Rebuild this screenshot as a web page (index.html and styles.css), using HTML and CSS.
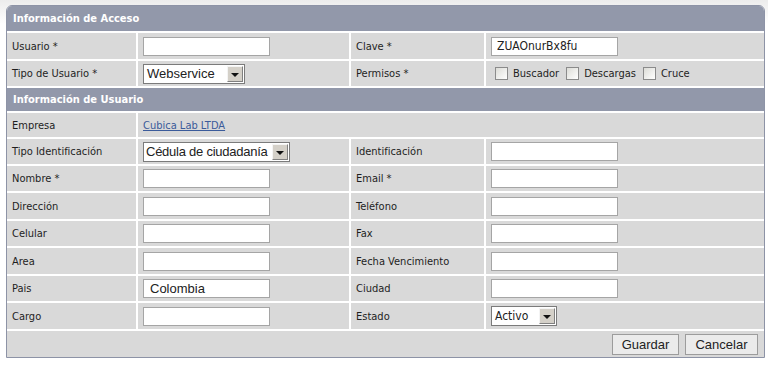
FILE: index.html
```html
<!DOCTYPE html>
<html lang="es">
<head>
    <meta charset="UTF-8">
    <title>Usuario</title>
    <link rel="stylesheet" href="styles.css">
</head>
<body>
    <div class="panel">
        <!-- Acceso -->
        <div class="section-title">Información de Acceso</div>

        <div class="cell label">Usuario *</div>
        <div class="cell"><input type="text" class="field"></div>
        <div class="cell label">Clave *</div>
        <div class="cell"><input type="text" class="field field-pass" value="ZUAOnurBx8fu"></div>

        <div class="cell label">Tipo de Usuario *</div>
        <div class="cell">
            <span class="combo combo-type">
                <span class="combo-text">Webservice</span>
                <span class="combo-arrow"></span>
            </span>
        </div>
        <div class="cell label">Permisos *</div>
        <div class="cell checks">
            <label class="check"><input type="checkbox"> Buscador</label>
            <label class="check"><input type="checkbox"> Descargas</label>
            <label class="check"><input type="checkbox"> Cruce</label>
        </div>

        <!-- Usuario -->
        <div class="section-title">Información de Usuario</div>

        <div class="cell label">Empresa</div>
        <div class="cell wide"><a href="#" class="link">Cubica Lab LTDA</a></div>

        <div class="cell label">Tipo Identificación</div>
        <div class="cell">
            <span class="combo combo-id">
                <span class="combo-text">Cédula de ciudadanía</span>
                <span class="combo-arrow"></span>
            </span>
        </div>
        <div class="cell label">Identificación</div>
        <div class="cell"><input type="text" class="field"></div>

        <div class="cell label">Nombre *</div>
        <div class="cell"><input type="text" class="field"></div>
        <div class="cell label">Email *</div>
        <div class="cell"><input type="text" class="field"></div>

        <div class="cell label">Dirección</div>
        <div class="cell"><input type="text" class="field"></div>
        <div class="cell label">Teléfono</div>
        <div class="cell"><input type="text" class="field"></div>

        <div class="cell label">Celular</div>
        <div class="cell"><input type="text" class="field"></div>
        <div class="cell label">Fax</div>
        <div class="cell"><input type="text" class="field"></div>

        <div class="cell label">Area</div>
        <div class="cell"><input type="text" class="field"></div>
        <div class="cell label">Fecha Vencimiento</div>
        <div class="cell"><input type="text" class="field"></div>

        <div class="cell label">Pais</div>
        <div class="cell"><input type="text" class="field field-country" value="Colombia"></div>
        <div class="cell label">Ciudad</div>
        <div class="cell"><input type="text" class="field"></div>

        <div class="cell label">Cargo</div>
        <div class="cell"><input type="text" class="field"></div>
        <div class="cell label">Estado</div>
        <div class="cell">
            <span class="combo combo-state">
                <span class="combo-text">Activo</span>
                <span class="combo-arrow"></span>
            </span>
        </div>

        <div class="cell actions">
            <button class="btn btn-save">Guardar</button>
            <button class="btn btn-cancel">Cancelar</button>
        </div>
    </div>
</body>
</html>
```

FILE: styles.css
```css
html { background: #ffffff; }

body {
    margin: 0;
    padding: 5px 0 0 6px;
    background: #ffffff linear-gradient(#ececec, #ffffff 24px) no-repeat;
    font-family: Tahoma, "DejaVu Sans Condensed", "DejaVu Sans", sans-serif;
    font-stretch: condensed;
    font-size: 11px;
    color: #1e1e1e;
}

.panel {
    width: 757px;
    display: grid;
    grid-template-columns: 129px 211px 133px 1fr;
    grid-template-rows: 25px 26px 25px 23px 24px 25px 25px 26px 25px 26px 25px 26px 26px;
    gap: 2px;
    background: #ffffff;
    border: 1px solid #8d93a6;
    border-radius: 6px 6px 0 0;
    overflow: hidden;
}

.section-title {
    grid-column: 1 / -1;
    display: flex;
    align-items: center;
    padding-left: 6px;
    background: #9298aa;
    color: #ffffff;
    font-weight: bold;
}

.cell {
    display: flex;
    align-items: center;
    padding-left: 5px;
    background: #d9d9d9;
}

.wide { grid-column: 2 / -1; }

.field {
    box-sizing: border-box;
    width: 127px;
    height: 19px;
    margin: 0;
    padding: 0 5px;
    border: 1px solid #a5a5a5;
    background: #ffffff;
    font-family: "Liberation Sans", Arial, sans-serif;
    font-size: 13px;
    color: #222;
    outline: none;
}

.field-pass {
    font-family: Tahoma, "DejaVu Sans Condensed", "DejaVu Sans", sans-serif;
    font-size: 12px;
}

.field-country { padding-left: 6px; }

.combo {
    box-sizing: border-box;
    display: inline-flex;
    align-items: center;
    height: 20px;
    padding: 1px;
    border: 1px solid #7b7b7b;
    background: #ffffff;
    font-family: "Liberation Sans", Arial, sans-serif;
    font-size: 13px;
    color: #222;
}

.combo-text {
    flex: 1;
    min-width: 0;
    overflow: hidden;
    padding-left: 2px;
    white-space: nowrap;
}

.combo-type { width: 102px; }
.combo-id { width: 147px; }
.combo-id .combo-text { letter-spacing: -0.25px; padding-left: 1px; }
.combo-state {
    width: 66px;
    font-family: Tahoma, "DejaVu Sans Condensed", "DejaVu Sans", sans-serif;
    font-size: 12px;
}

.combo-arrow {
    box-sizing: border-box;
    flex: none;
    width: 16px;
    height: 16px;
    display: flex;
    align-items: center;
    justify-content: center;
    background: #d4d0c8;
    border: 1px solid;
    border-color: #f4f4f4 #808080 #808080 #f4f4f4;
}

.combo-arrow::after {
    content: "";
    border-left: 4px solid transparent;
    border-right: 4px solid transparent;
    border-top: 4px solid #111;
    margin-top: 2px;
}

.checks { padding-left: 9px; gap: 7px; }

.check {
    display: flex;
    align-items: center;
    gap: 5px;
}

.check input {
    appearance: none;
    -webkit-appearance: none;
    box-sizing: border-box;
    width: 13px;
    height: 13px;
    margin: 0;
    border: 1px solid #8b8b8b;
    background: linear-gradient(135deg, #dcdcd7, #ffffff);
}

.link {
    color: #3b5b9a;
    text-decoration: underline;
}

.actions {
    grid-column: 1 / -1;
    justify-content: flex-end;
    gap: 6px;
    padding-right: 6px;
}

.btn {
    box-sizing: border-box;
    height: 21px;
    padding: 0;
    border: 1px solid #9c9c9c;
    background: #ebebeb;
    font-family: "Liberation Sans", Arial, sans-serif;
    font-size: 13px;
    color: #222;
    cursor: pointer;
}

.btn-save { width: 67px; }
.btn-cancel { width: 73px; }
```
